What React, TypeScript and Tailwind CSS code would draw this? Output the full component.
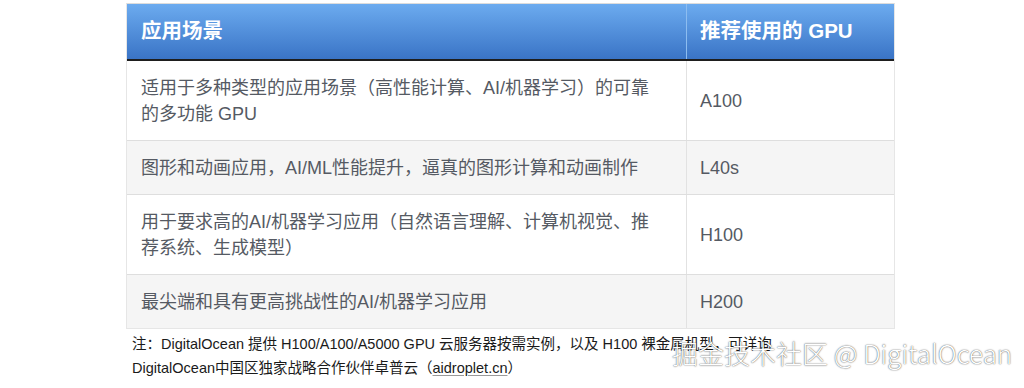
const rows = [
  {
    scene: '适用于多种类型的应用场景（高性能计算、AI/机器学习）的可靠的多功能 GPU',
    gpu: 'A100',
    alt: false,
  },
  { scene: '图形和动画应用，AI/ML性能提升，逼真的图形计算和动画制作', gpu: 'L40s', alt: true },
  {
    scene: '用于要求高的AI/机器学习应用（自然语言理解、计算机视觉、推荐系统、生成模型）',
    gpu: 'H100',
    alt: false,
  },
  { scene: '最尖端和具有更高挑战性的AI/机器学习应用', gpu: 'H200', alt: true },
];

export default function App() {
  return (
    <div
      className="relative w-[1024px] h-[388px] bg-white overflow-hidden"
      style={{ fontFamily: '"Liberation Sans", "Noto Sans CJK SC", sans-serif' }}
    >
      <div className="pt-[3px] pl-[126px]">
        {/* table */}
        <div className="w-[769px] border border-[#e6e6e6] border-t-[#dcdcdc]">
          <div className="flex h-[57px] bg-gradient-to-b from-[#6cabef] to-[#3a74c6] border-b-2 border-[#1e1e1e] text-white font-bold text-[20.5px]">
            <div className="w-[560px] flex items-center pl-[14px] border-r border-[#8dbdf0]">应用场景</div>
            <div className="flex-1 flex items-center pl-[13px]">推荐使用的 GPU</div>
          </div>
          {rows.map((r, i) => (
            <div
              key={r.gpu}
              className={`flex text-[18px] leading-[26px] text-[#555a63] ${r.alt ? 'bg-[#f5f5f5]' : 'bg-white'} ${
                i < rows.length - 1 ? 'border-b border-[#dedede]' : ''
              }`}
            >
              <div className="w-[560px] py-[13.5px] pl-[14px] pr-[30px] border-r border-[#e2e2e2]">{r.scene}</div>
              <div className="flex-1 flex items-center pl-[13px]">{r.gpu}</div>
            </div>
          ))}
        </div>

        {/* footnote */}
        <div className="pt-[3px] pl-[6px] text-[14.5px] leading-[24px] text-[#1a1a1a]">
          <div>注：DigitalOcean 提供 H100/A100/A5000 GPU 云服务器按需实例，以及 H100 裸金属机型，可详询</div>
          <div>
            DigitalOcean中国区独家战略合作伙伴卓普云（
            <span className="underline decoration-[#9a9a9a] underline-offset-2">aidroplet.cn</span>）
          </div>
        </div>
      </div>

      {/* watermark */}
      <div
        className="absolute left-[672px] top-[336px] text-[26px] leading-[34px] text-white font-light whitespace-nowrap [text-shadow:0_0_1px_rgba(0,0,0,0.6),0_0_2px_rgba(0,0,0,0.4)]"
        style={{ fontFamily: '"Noto Sans CJK SC", "DejaVu Sans", sans-serif' }}
      >
        掘金技术社区 @ DigitalOcean
      </div>
    </div>
  );
}
